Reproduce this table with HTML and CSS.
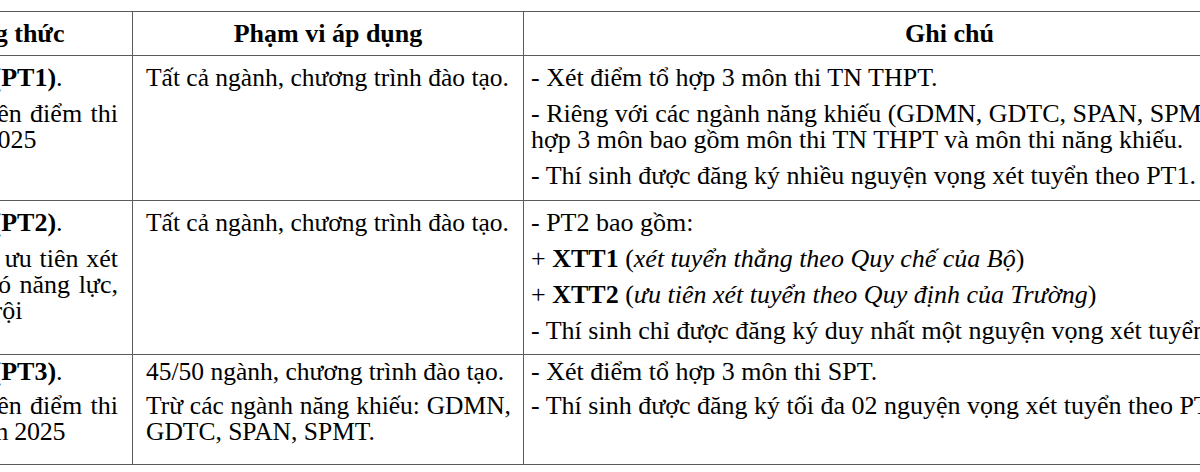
FILE: index.html
```html
<!DOCTYPE html>
<html lang="vi">
<head>
<meta charset="utf-8">
<title>Phương thức xét tuyển</title>
<link rel="stylesheet" href="styles.css">
</head>
<body>
<div class="viewport">
  <table class="admission">
    <colgroup>
      <col class="c1">
      <col class="c2">
      <col class="c3">
    </colgroup>
    <thead>
      <tr class="head">
        <th class="h-method">Tên phương thức</th>
        <th>Phạm vi áp dụng</th>
        <th>Ghi chú</th>
      </tr>
    </thead>
    <tbody>
      <tr class="r1">
        <td class="method">
          <p><b>Phương thức 1 (PT1)</b>.</p>
          <p><span class="line j">Xét tuyển dựa trên điểm thi</span><span class="line">tốt nghiệp năm 2025</span></p>
        </td>
        <td class="scope">
          <p>Tất cả ngành, chương trình đào tạo.</p>
        </td>
        <td class="note">
          <p>- Xét điểm tổ hợp 3 môn thi TN THPT.</p>
          <p>- Riêng với các ngành năng khiếu (GDMN, GDTC, SPAN, SPMT), xét điểm tổ<br>hợp 3 môn bao gồm môn thi TN THPT và môn thi năng khiếu.</p>
          <p>- Thí sinh được đăng ký nhiều nguyện vọng xét tuyển theo PT1.</p>
        </td>
      </tr>
      <tr class="r2">
        <td class="method">
          <p><b>Phương thức 2 (PT2)</b>.</p>
          <p><span class="line j">Xét tuyển thẳng, ưu tiên xét</span><span class="line j">tuyển học sinh có năng lực,</span><span class="line">thành tích vượt trội</span></p>
        </td>
        <td class="scope">
          <p>Tất cả ngành, chương trình đào tạo.</p>
        </td>
        <td class="note">
          <p>- PT2 bao gồm:</p>
          <p>+ <b>XTT1</b> (<i>xét tuyển thẳng theo Quy chế của Bộ</i>)</p>
          <p>+ <b>XTT2</b> (<i>ưu tiên xét tuyển theo Quy định của Trường</i>)</p>
          <p>- Thí sinh chỉ được đăng ký duy nhất một nguyện vọng xét tuyển theo PT2.</p>
        </td>
      </tr>
      <tr class="r3">
        <td class="method">
          <p><b>Phương thức 3 (PT3)</b>.</p>
          <p><span class="line j">Xét tuyển dựa trên điểm thi</span><span class="line tight">đánh giá SPT năm 2025</span></p>
        </td>
        <td class="scope">
          <p>45/50 ngành, chương trình đào tạo.</p>
          <p class="just">Trừ các ngành năng khiếu: GDMN, GDTC, SPAN, SPMT.</p>
        </td>
        <td class="note">
          <p>- Xét điểm tổ hợp 3 môn thi SPT.</p>
          <p>- Thí sinh được đăng ký tối đa 02 nguyện vọng xét tuyển theo PT3.</p>
        </td>
      </tr>
    </tbody>
  </table>
</div>
</body>
</html>
```
FILE: styles.css
```css
html, body {
  margin: 0;
  padding: 0;
  background: #ffffff;
}

.viewport {
  width: 1200px;
  height: 472px;
  overflow: hidden;
  padding-top: 11px;
  box-sizing: border-box;
}

.admission {
  margin-left: -187px;
  border-collapse: collapse;
  table-layout: fixed;
  width: 1562px;
  font-family: "Liberation Serif", "Times New Roman", serif;
  font-size: 26px;
  line-height: 26px;
  color: #000000;
}

.c1 { width: 319px; }
.c2 { width: 391px; }
.c3 { width: 852px; }

.admission th,
.admission td {
  border: 1px solid #5a5a5a;
  vertical-align: top;
}

.admission th {
  height: 43px;
  padding: 0;
  font-weight: bold;
  text-align: center;
  vertical-align: middle;
}

.admission th.h-method {
  padding-right: 10px;
}

.admission td {
  padding: 9px 0 0 0;
}

.admission p {
  margin: 0 0 10px 0;
}

.method {
  padding-left: 8px !important;
  padding-right: 14px !important;
}

.method .line {
  display: block;
}

.method .line.j {
  text-align: justify;
  text-align-last: justify;
}

.method .line.tight {
  letter-spacing: -0.3px;
}

.scope {
  font-size: 25.5px;
  padding-left: 13px !important;
  padding-right: 12px !important;
}

.scope .just {
  text-align: justify;
}

.note {
  padding-left: 7px !important;
  padding-right: 7px !important;
  white-space: nowrap;
}

.r1 td { height: 135px; }
.r2 td { height: 142px; }
.r3 td { height: 105px; padding-top: 4px; }
.r3 p { margin-bottom: 8px; }
```
